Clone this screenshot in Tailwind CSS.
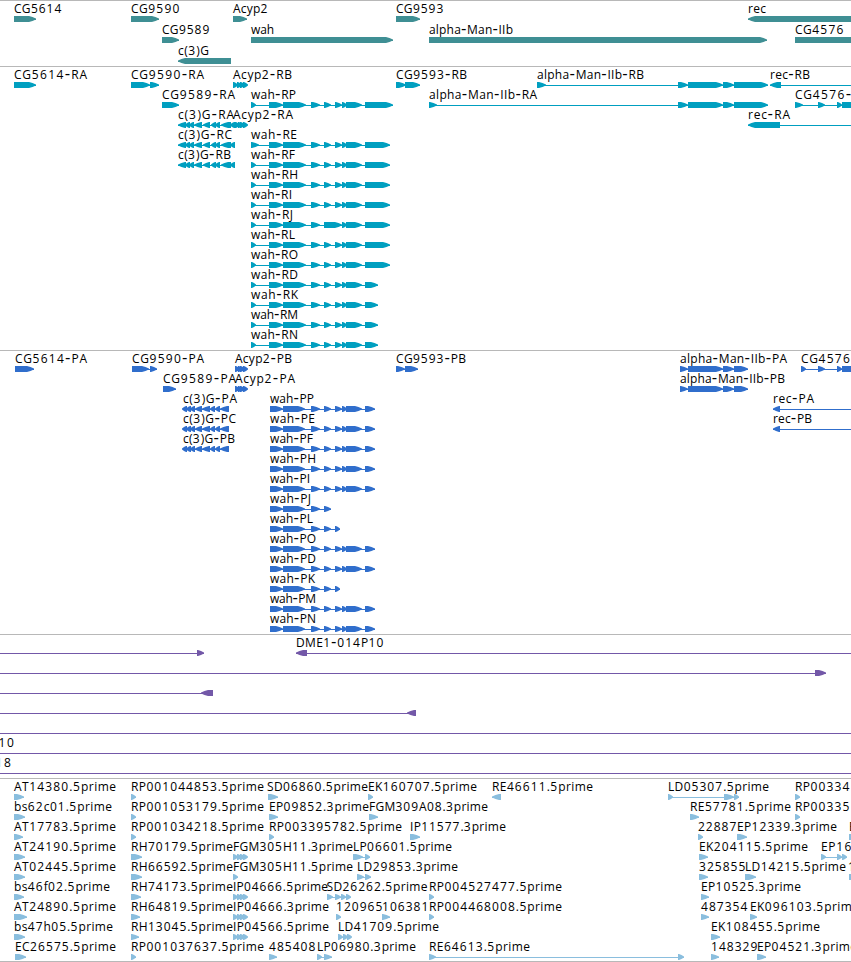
<!DOCTYPE html>
<html lang="en">
<head>
    <meta charset="UTF-8">
    <meta name="viewport" content="width=device-width, initial-scale=1.0">
    <title>Genome Browser</title>
    <script src="https://cdn.jsdelivr.net/npm/@tailwindcss/browser@4"></script>
</head>
<body class="bg-white overflow-hidden">
    <main class="flex flex-col w-[851px] font-['Open_Sans','Noto_Sans',sans-serif] text-[12px]">
        <!-- Genes -->
        <section class="h-[66px] border-t border-[#b8b8b8]"><svg id="genes" class="block w-full h-full fill-[#3f8f94]"></svg></section>
        <!-- Transcripts -->
        <section class="h-[284px] border-t border-[#b8b8b8]"><svg id="transcripts" class="block w-full h-full fill-[#009fc0]"></svg></section>
        <!-- Coding sequences -->
        <section class="h-[284px] border-t border-[#b8b8b8]"><svg id="cds" class="block w-full h-full fill-[#306ecc]"></svg></section>
        <!-- Clones -->
        <section class="h-[144px] border-t border-[#b8b8b8]"><svg id="clones" class="block w-full h-full fill-[#7358a8]"></svg></section>
        <!-- ESTs -->
        <section class="h-[184px] border-y border-[#b8b8b8]"><svg id="ests" class="block w-full h-full fill-[#8abede]"></svg></section>
    </main>

    <script>
        // Feature: [row, label, label x, label width, blocks, options]
        // Blocks are "start-end" pairs; options: left = reverse strand, line = [from, to]
        const LEFT = { left: true };
        const ACYP = '233-237 237-240 240-243 243-247';
        const C3G = '178-186 186-190 190-194 194-202 203-210 211-216 216-220 221-231 231-235';
        const C3P = '183-187 187-191 191-195 195-202 202-210 210-215 215-220 220-229';
        const WAH = '269-283 283-306 311-320 324-331 335-342 342-346 346-362';
        const WAHP = '270-283 283-305 311-320 324-331';
        const MAN = '678-688 688-723 723-734 734-768';
        const MANP = '680-688 688-723 723-734 734-748';

        const genes = [
            [0, 'CG5614', 14, 48, '14-36'],
            [0, 'CG9590', 131, 49, '131-159'],
            [0, 'Acyp2', 233, 35, '233-247'],
            [0, 'CG9593', 396, 48, '396-420'],
            [0, 'rec', 748, 18, '748-870', LEFT],
            [1, 'CG9589', 162, 48, '162-179'],
            [1, 'wah', 251, 23, '251-393'],
            [1, 'alpha-Man-IIb', 429, 84, '429-767'],
            [1, 'CG4576', 795, 49, '795-870'],
            [2, 'c(3)G', 178, 31, '178-231', LEFT]
        ];

        const transcripts = [
            [0, 'CG5614-RA', 14, 73, '14-36'],
            [0, 'CG9590-RA', 131, 73, '131-150 150-159'],
            [0, 'Acyp2-RB', 233, 59, ACYP],
            [0, 'CG9593-RB', 396, 71, '396-406 405-420'],
            [0, 'alpha-Man-IIb-RB', 537, 107, '537-546 ' + MAN],
            [0, 'rec-RB', 770, 40, '770-781', { left: true, line: [770, 851] }],
            [1, 'CG9589-RA', 162, 73, '162-179'],
            [1, 'wah-RP', 251, 45, '251-256 ' + WAH + ' 365-393'],
            [1, 'alpha-Man-IIb-RA', 429, 108, '429-437 ' + MAN],
            [1, 'CG4576-RA', 795, 73, '795-803 818-825 837-842 842-870'],
            [2, 'c(3)G-RA', 178, 56, C3G, LEFT],
            [2, 'Acyp2-RA', 233, 60, '235-238 238-240 240-243 243-246'],
            [2, 'rec-RA', 748, 42, '748-780', { left: true, line: [748, 851] }],
            [3, 'c(3)G-RC', 178, 54, C3G, LEFT],
            [4, 'c(3)G-RB', 178, 53, C3G, LEFT],
            [3, 'wah-RE', 251, 46, '251-259 ' + WAH + ' 365-390'],
            [4, 'wah-RF', 251, 44, '251-256 ' + WAH + ' 365-390'],
            [5, 'wah-RH', 251, 47, '251-256 ' + WAH + ' 365-390'],
            [6, 'wah-RI', 251, 41, '251-256 ' + WAH + ' 365-390'],
            [7, 'wah-RJ', 251, 42, '251-256 269-283 283-306 311-320 324-342 342-346 346-362 365-390'],
            [8, 'wah-RL', 251, 44, '251-256 ' + WAH + ' 365-390'],
            [9, 'wah-RO', 251, 47, '251-256 ' + WAH + ' 365-390'],
            [10, 'wah-RD', 251, 47, '251-256 ' + WAH + ' 365-378'],
            [11, 'wah-RK', 251, 47, '251-256 ' + WAH + ' 365-378'],
            [12, 'wah-RM', 251, 47, '251-256 ' + WAH + ' 365-378'],
            [13, 'wah-RN', 251, 47, '251-256 ' + WAH + ' 365-378']
        ];

        const cds = [
            [0, 'CG5614-PA', 15, 72, '15-34'],
            [0, 'CG9590-PA', 132, 72, '132-149 150-157'],
            [0, 'Acyp2-PB', 235, 57, '235-238 238-240 240-243 243-246'],
            [0, 'CG9593-PB', 396, 70, '396-405 405-418'],
            [0, 'alpha-Man-IIb-PA', 680, 107, MANP],
            [0, 'CG4576-PA', 801, 72, '801-806 818-825 837-842 842-870'],
            [1, 'CG9589-PA', 163, 73, '163-176'],
            [1, 'Acyp2-PA', 235, 60, '235-238 238-240 240-243 243-246'],
            [1, 'alpha-Man-IIb-PB', 680, 105, MANP],
            [2, 'c(3)G-PA', 183, 54, C3P, LEFT],
            [3, 'c(3)G-PC', 183, 53, C3P, LEFT],
            [4, 'c(3)G-PB', 183, 52, C3P, LEFT],
            [2, 'rec-PA', 773, 41, '773-780', { left: true, line: [773, 851] }],
            [3, 'rec-PB', 773, 39, '773-780', { left: true, line: [773, 851] }],
            [2, 'wah-PP', 270, 44, WAHP + ' 335-342 342-346 346-362 365-375'],
            [3, 'wah-PE', 270, 45, WAHP + ' 335-342 342-346 346-362 365-375'],
            [4, 'wah-PF', 270, 43, WAHP + ' 335-342 342-346 346-362 365-375'],
            [5, 'wah-PH', 270, 46, WAHP + ' 335-342 342-346 346-362 365-375'],
            [6, 'wah-PI', 270, 40, WAHP + ' 335-342 342-346 346-362 365-375'],
            [7, 'wah-PJ', 270, 41, WAHP],
            [8, 'wah-PL', 270, 43, WAHP + ' 335-340'],
            [9, 'wah-PO', 270, 46, WAHP + ' 335-342 342-346 346-362 365-375'],
            [10, 'wah-PD', 270, 46, WAHP + ' 335-342 342-346 346-362 365-375'],
            [11, 'wah-PK', 270, 45, WAHP + ' 335-340'],
            [12, 'wah-PM', 270, 46, WAHP + ' 335-342 342-346 346-362 365-375'],
            [13, 'wah-PN', 270, 46, WAHP + ' 335-342 342-346 346-362 365-375']
        ];

        const clones = [
            [0, '', 0, 0, '197-204', { line: [0, 204] }],
            [0, 'DME1-014P10', 296, 88, '296-307', { left: true, line: [296, 851] }],
            [1, '', 0, 0, '815-826', { line: [0, 826] }],
            [2, '', 0, 0, '201-213', { left: true, line: [0, 213] }],
            [3, '', 0, 0, '407-416', { left: true, line: [0, 416] }],
            [4, '', 0, 0, '', { line: [0, 851] }],
            [5, '10', -1.5, 16, '', { line: [0, 851] }],
            [6, '18', -4.5, 16, '', { line: [0, 851] }]
        ];

        const FOUR = '233-237 237-240 240-243 243-246';
        const ests = [
            [0, 'AT14380.5prime', 14, 102, '14-24'],
            [1, 'bs62c01.5prime', 14, 98, '14-25'],
            [2, 'AT17783.5prime', 14, 102, '14-23'],
            [3, 'AT24190.5prime', 14, 102, '14-25'],
            [4, 'AT02445.5prime', 14, 102, '14-25'],
            [5, 'bs46f02.5prime', 14, 96, '14-24'],
            [6, 'AT24890.5prime', 14, 102, '14-27'],
            [7, 'bs47h05.5prime', 14, 99, '14-25'],
            [8, 'EC26575.5prime', 15, 101, '15-26'],
            [0, 'RP001044853.5prime', 131, 133, '131-136'],
            [1, 'RP001053179.5prime', 131, 133, '131-136'],
            [2, 'RP001034218.5prime', 131, 133, '131-136'],
            [3, 'RH70179.5prime', 131, 102, '131-142'],
            [4, 'RH66592.5prime', 131, 102, '131-142'],
            [5, 'RH74173.5prime', 131, 102, '131-141'],
            [6, 'RH64819.5prime', 131, 102, '131-140'],
            [7, 'RH13045.5prime', 131, 102, '131-139'],
            [8, 'RP001037637.5prime', 131, 133, '131-136'],
            [0, 'SD06860.5prime', 267, 101, '268-278'],
            [1, 'EP09852.3prime', 269, 100, '269-278'],
            [2, 'RP003395782.5prime', 269, 133, '269-274'],
            [3, 'FGM305H11.3prime', 233, 120, FOUR],
            [4, 'FGM305H11.5prime', 233, 120, '233-238'],
            [5, 'IP04666.5prime', 233, 95, FOUR],
            [6, 'IP04666.3prime', 233, 96, FOUR],
            [7, 'IP04566.5prime', 233, 96, FOUR],
            [8, '485408', 269, 47, '269-277'],
            [0, 'EK160707.5prime', 368, 109, '368-373'],
            [1, 'FGM309A08.3prime', 369, 119, '369-378'],
            [2, 'IP11577.3prime', 410, 96, '410-420'],
            [3, 'LP06601.5prime', 353, 99, '353-363 365-370'],
            [4, 'LD29853.3prime', 357, 101, '357-364 365-371'],
            [5, 'SD26262.5prime', 326.5, 101, '327-333 335-341 341-346 346-351'],
            [6, '120965', 336, 47, '336-341'],
            [6, '106381', 382, 47, '382-390'],
            [7, 'LD41709.5prime', 338, 101, '338-343 343-347 347-351'],
            [8, 'LP06980.3prime', 317, 99, '317-322 324-332'],
            [0, 'RE46611.5prime', 492, 101, '492-501', LEFT],
            [5, 'RP004527477.5prime', 429, 133, '429-434'],
            [6, 'RP004468008.5prime', 429, 133, '429-434'],
            [8, 'RE64613.5prime', 429, 101, '429-436 678-684'],
            [0, 'LD05307.5prime', 668, 101, '668-673 724-734 734-739'],
            [1, 'RE57781.5prime', 690, 101, '690-699'],
            [2, '22887', 698, 39, '698-703'],
            [3, 'EK204115.5prime', 699, 109, '699-708'],
            [4, '325855', 699, 47, '699-708'],
            [5, 'EP10525.3prime', 701, 100, '701-709'],
            [6, '487354', 701, 47, '701-709'],
            [7, 'EK108455.5prime', 711, 109, '711-720'],
            [8, '148329', 711, 47, '711-719'],
            [0, 'RP00334', 795, 55, '795-800'],
            [1, 'RP00335', 795, 55, '795-800'],
            [2, 'EP12339.3prime', 737, 100, '737-747'],
            [2, 'E', 849, 7, '849-858'],
            [3, 'EP16', 821, 31, '821-826 837-842 842-847'],
            [4, 'LD14215.5prime', 745, 101, '745-756'],
            [4, '1', 848, 8, '849-858'],
            [6, 'EK096103.5prime', 750, 109, '750-757'],
            [8, 'EP04521.3prime', 757, 100, '757-766']
        ];

        // Arrow-shaped block, 6px high, with a short taper towards its strand
        function arrow(start, end, top, left) {
            // very short blocks keep a readable head and run into their neighbour
            if (end - start < 5) {
                if (left) start = end - 5;
                else end = start + 5;
            }
            const tip = Math.min(7, end - start - 1);
            const base = left ? start + tip : end - tip;
            const head = left ? start : end;
            const tail = left ? end : start;
            const mid = (base + head) / 2;
            return `<polygon points="${tail},${top} ${base},${top} ${mid},${top + 1} ${head},${top + 2.5} ${head},${top + 3.5} ${mid},${top + 5} ${base},${top + 6} ${tail},${top + 6}"/>`;
        }

        function drawTrack(id, features, pitch) {
            let out = '';
            features.forEach(([row, label, x, width, blocks, options = {}]) => {
                const top = 15 + row * pitch;
                const spans = blocks ? blocks.split(' ').map(b => b.split('-').map(Number)) : [];
                const line = options.line || [spans[0][0], spans[spans.length - 1][1]];
                out += `<rect x="${line[0]}" y="${top + 3}" width="${line[1] - line[0]}" height="1"/>`;
                spans.forEach(([start, end]) => {
                    out += arrow(start, end, top, options.left);
                });
                if (label) {
                    const text = label.replace(/\d+|-/g, part => part === '-'
                        ? `<tspan class="font-['DejaVu_Sans'] text-[15px] tracking-[0.5px]">-</tspan>`
                        : `<tspan class="tracking-[0.7px]">${part}</tspan>`);
                    out += `<text class="fill-black" x="${x}" y="${top - 3}" textLength="${width}">${text}</text>`;
                }
            });
            document.getElementById(id).innerHTML = out;
        }

        drawTrack('genes', genes, 21);
        drawTrack('transcripts', transcripts, 20);
        drawTrack('cds', cds, 20);
        drawTrack('clones', clones, 20);
        drawTrack('ests', ests, 20);
    </script>
</body>
</html>
